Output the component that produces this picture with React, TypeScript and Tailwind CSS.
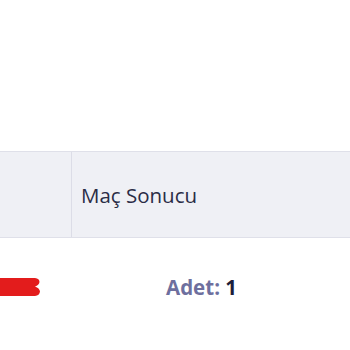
export default function App() {
  return (
    <div className="w-[350px] h-[350px] bg-white overflow-hidden pt-[151px] font-['Open_Sans',sans-serif]">
      <div className="flex h-[87px] border-y border-[#dfe0e9] bg-[#eff0f5]">
        <div className="w-[72px] border-r border-[#dcdde7]" />
        <div className="flex items-center pl-[9px] pt-[2px] text-[20.5px] text-[#2a2c46]">Maç Sonucu</div>
      </div>
      <div className="flex items-center h-[18px] mt-[40px]">
        <svg width="40" height="18" viewBox="0 0 40 18" className="shrink-0">
          <path d="M0 0 H35 Q39.5 0.5 39.5 4 Q39 7 35 8.5 Q39.5 10 40 13.5 Q39.5 17.5 35 18 H0 Z" fill="#e31c1c" />
        </svg>
        <div className="ml-[126px] text-[20.5px] font-bold leading-none">
          <span className="text-[#6e6f9e]">Adet:</span> <span className="text-[#1d1d3a]">1</span>
        </div>
      </div>
    </div>
  );
}
